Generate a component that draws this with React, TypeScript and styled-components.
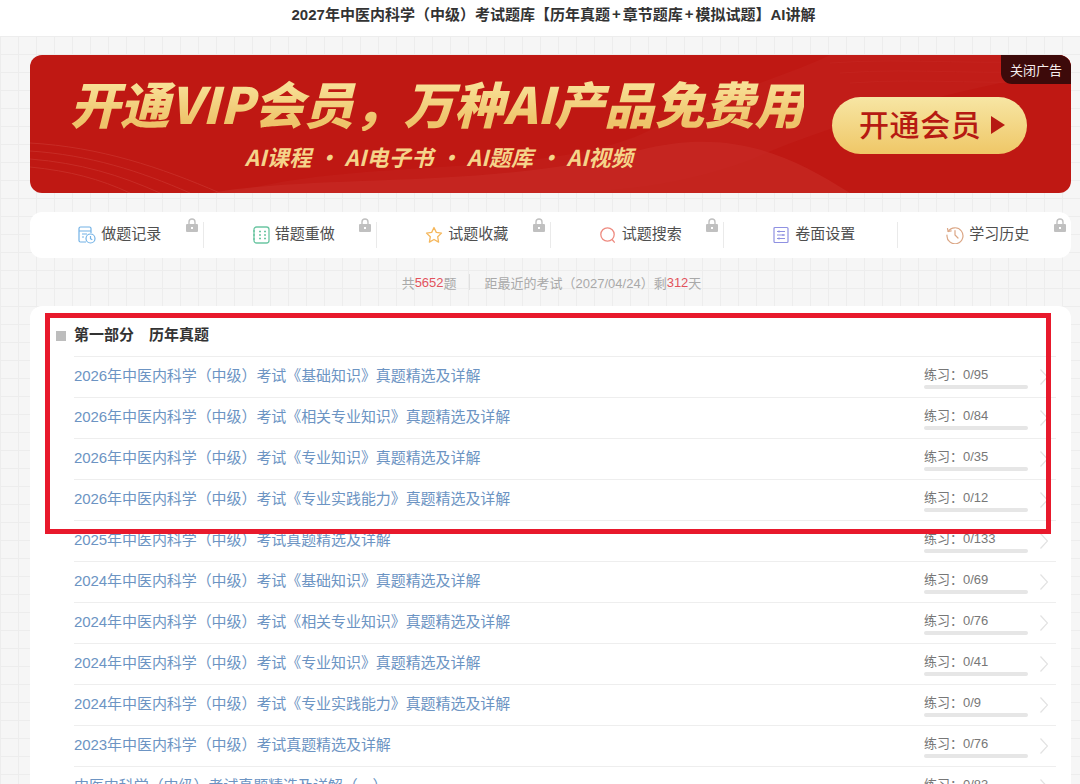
import React from "react";
import styled, { createGlobalStyle } from "styled-components";

const Global = createGlobalStyle`
  html, body { margin: 0; padding: 0; height: 784px; overflow: hidden; background: #f6f6f6; }
  body { font-family: "Liberation Sans", "Noto Sans CJK SC", sans-serif; }
`;

const Page = styled.div`
  position: relative;
  width: 1080px;
  height: 784px;
  overflow: hidden;
  background-color: #f6f6f6;
  background-image:
    linear-gradient(#ededed 1px, transparent 1px),
    linear-gradient(90deg, #ededed 1px, transparent 1px);
  background-size: 18px 18px;
`;

const Header = styled.header`
  height: 36px;
  background: #fff;
  display: flex;
  align-items: center;
  justify-content: center;
  box-sizing: border-box;
  padding: 0 0 9px 27px;
  font-size: 15px;
  font-weight: 700;
  color: #333;
`;

const PlusSign = styled.span`
  margin: 0 2px;
`;

const Main = styled.main`
  padding: 19px 9px 0 30px;
`;

const Banner = styled.section`
  position: relative;
  height: 138px;
  border-radius: 12px;
  overflow: hidden;
  background: #bf1813;
  display: flex;
  align-items: center;
  padding-left: 40px;
  box-sizing: border-box;
`;

const BannerWaves = styled.svg`
  position: absolute;
  inset: 0;
  width: 100%;
  height: 100%;
`;

const BannerCopy = styled.div`
  position: relative;
  width: 734px;
  display: flex;
  flex-direction: column;
  align-items: center;
  margin-top: -4px;
`;

const BannerTitle = styled.div`
  font-family: "Noto Sans CJK SC", sans-serif;
  font-size: 50px;
  line-height: 58px;
  font-weight: 900;
  font-style: italic;
  white-space: nowrap;
  background: linear-gradient(180deg, #f8e096 20%, #eec36a 85%);
  -webkit-background-clip: text;
  background-clip: text;
  color: transparent;
`;

const BannerSub = styled.div`
  font-family: "Noto Sans CJK SC", sans-serif;
  font-size: 22px;
  line-height: 30px;
  font-weight: 700;
  font-style: italic;
  letter-spacing: 0.35px;
  color: #f5d48a;
  white-space: pre;
  margin-top: 10px;
  padding-left: 4px;
`;

const OpenButton = styled.div`
  position: relative;
  margin-left: 28px;
  margin-top: 2px;
  width: 195px;
  height: 57px;
  border-radius: 29px;
  background: linear-gradient(180deg, #f7e6a4 0%, #efc767 100%);
  display: flex;
  align-items: center;
  padding-left: 27px;
  box-sizing: border-box;
  font-family: "Noto Sans CJK SC", sans-serif;
  font-size: 30px;
  letter-spacing: 0.6px;
  font-weight: 500;
  color: #b61a12;
  white-space: nowrap;
`;

const ButtonLabel = styled.span`
  padding-bottom: 4px;
  margin-right: 10px;
`;

const Triangle = styled.span`
  width: 0;
  height: 0;
  border-left: 14px solid #b61a12;
  border-top: 9px solid transparent;
  border-bottom: 9px solid transparent;
`;

const CloseAd = styled.div`
  position: absolute;
  top: 0;
  right: 0;
  width: 70px;
  height: 29px;
  background: #3d0a0a;
  border-bottom-left-radius: 11px;
  display: flex;
  align-items: center;
  justify-content: center;
  font-size: 13px;
  color: #f4eeee;
`;

const Toolbar = styled.nav`
  margin-top: 19px;
  height: 46px;
  background: #fff;
  border-radius: 12px;
  display: grid;
  grid-template-columns: repeat(6, 1fr);
  align-items: center;
`;

const ToolItem = styled.div<{ $last?: boolean }>`
  position: relative;
  height: 26px;
  display: flex;
  align-items: center;
  justify-content: center;
  gap: 5px;
  padding-left: 7px;
  font-size: 15px;
  color: #4f4f4f;
  border-right: ${(p) => (p.$last ? "none" : "1px solid #eaeaea")};
`;

const ToolLabel = styled.span`
  padding-bottom: 5px;
`;

const LockBadge = styled.svg`
  position: absolute;
  top: -4px;
  right: 5px;
  width: 12px;
  height: 14px;
`;

const ToolIcon = styled.svg`
  width: 18px;
  height: 18px;
  flex: none;
  fill: none;
`;

const Stats = styled.div`
  height: 48px;
  display: flex;
  align-items: center;
  justify-content: center;
  font-size: 13px;
  color: #a9a9a9;
  margin-left: 2px;
`;

const Red = styled.span`
  color: #e2525c;
`;

const StatDivider = styled.span`
  width: 1px;
  height: 16px;
  background: #e0e0e0;
  margin: 0 15px 0 12px;
`;

const Card = styled.section`
  background: #fff;
  border-radius: 12px 12px 0 0;
  padding: 9px 15px 0 26px;
`;

const SectionHead = styled.h2`
  margin: 0;
  height: 41px;
  box-sizing: border-box;
  padding-bottom: 4px;
  display: flex;
  align-items: center;
  gap: 8px;
  font-size: 15px;
  font-weight: 700;
  color: #333;
`;

const SquareMark = styled.span`
  width: 10px;
  height: 10px;
  margin-top: 5px;
  background: #bdbdbd;
`;

const Row = styled.div`
  margin-left: 18px;
  height: 41px;
  box-sizing: border-box;
  border-top: 1px solid #eeeeee;
  display: flex;
  align-items: center;
`;

const RowTitle = styled.a`
  flex: 1;
  font-size: 15px;
  letter-spacing: -0.07px;
  padding-bottom: 5px;
  color: #6c94c3;
  white-space: nowrap;
`;

const Practice = styled.div`
  width: 104px;
  display: flex;
  flex-direction: column;
  gap: 1px;
  margin-top: 1px;
  font-size: 13px;
  line-height: 18px;
  color: #777;
`;

const Track = styled.div`
  height: 4px;
  border-radius: 2px;
  background: #e6e6e6;
`;

const Chevron = styled.svg`
  width: 8px;
  height: 16px;
  margin: 0 8px 0 12px;
  fill: none;
  stroke: #e2e2e2;
  stroke-width: 1.2;
`;

const Annotation = styled.div`
  position: absolute;
  left: 45px;
  top: 313px;
  width: 1006px;
  height: 221px;
  box-sizing: border-box;
  border: 5px solid #e8192c;
  pointer-events: none;
`;

const Lock = () => (
  <LockBadge viewBox="0 0 12 14">
    <path d="M3 6V4a3 3 0 0 1 6 0v2" fill="none" stroke="#c0c0c0" strokeWidth="1.4" />
    <path fillRule="evenodd" fill="#c0c0c0" d="M1 6h10a1 1 0 0 1 1 1v6a1 1 0 0 1-1 1H1a1 1 0 0 1-1-1V7a1 1 0 0 1 1-1zM5 9v2h2V9z" />
  </LockBadge>
);

const RecordIcon = () => (
  <ToolIcon viewBox="0 0 18 18" stroke="#72b2e6" strokeWidth="1.2">
    <path d="M8 16H2.500A1.500 1.500 0 0 1 1 14.500v-12A1.500 1.500 0 0 1 2.500 1h9A1.500 1.500 0 0 1 13 2.500V7" />
    <path d="M1 5h12M4 8h5M4 11h2" />
    <circle cx="12.500" cy="12.500" r="4.500" />
    <path d="M12.500 10v2.700l1.800 1" />
  </ToolIcon>
);

const RedoIcon = () => (
  <ToolIcon viewBox="0 0 18 18" stroke="#6cc6a3" strokeWidth="1.3">
    <rect x="2" y="1" width="15" height="16" rx="2.500" />
    <path d="M1 5h2M1 9h2M1 13h2M7 5.500h2M12 5.500h2M7 9h2M12 9h2M7 12.500h2M12 12.500h2" />
  </ToolIcon>
);

const StarIcon = () => (
  <ToolIcon viewBox="0 0 18 18" stroke="#f5b75c" strokeWidth="1.3" strokeLinejoin="round">
    <path d="M9 1.500l2.300 4.900 5.200.7-3.800 3.700.9 5.300L9 13.500l-4.600 2.600.9-5.300L1.500 7.100l5.200-.7z" />
  </ToolIcon>
);

const SearchIcon = () => (
  <ToolIcon viewBox="0 0 18 18" stroke="#ee8b80" strokeWidth="1.3" strokeLinecap="round">
    <circle cx="8.500" cy="8.500" r="6.700" />
    <path d="M13.500 14l1.800 2.200" />
  </ToolIcon>
);

const SettingsIcon = () => (
  <ToolIcon viewBox="0 0 18 18" stroke="#8f91e2" strokeWidth="1.2">
    <rect x="2" y="1.500" width="14" height="15" rx="1" />
    <path d="M5 5.500h8M5 9h8M5 12.500h8" />
    <path d="M7 4.500v2M11 8v2M7 11.500v2" />
  </ToolIcon>
);

const HistoryIcon = () => (
  <ToolIcon viewBox="0 0 18 18" stroke="#dba685" strokeWidth="1.2" strokeLinecap="round" strokeLinejoin="round">
    <path d="M2.200 5.500A8 8 0 1 1 1 9" />
    <path d="M1.500 2.500l.7 3 3-.6" />
    <path d="M9 4.500V9l3 3" />
  </ToolIcon>
);

const tools: { label: string; icon: React.ReactNode; locked: boolean }[] = [
  { label: "做题记录", icon: <RecordIcon />, locked: true },
  { label: "错题重做", icon: <RedoIcon />, locked: true },
  { label: "试题收藏", icon: <StarIcon />, locked: true },
  { label: "试题搜索", icon: <SearchIcon />, locked: true },
  { label: "卷面设置", icon: <SettingsIcon />, locked: false },
  { label: "学习历史", icon: <HistoryIcon />, locked: true },
];

const rows: [string, number][] = [
  ["2026年中医内科学（中级）考试《基础知识》真题精选及详解", 95],
  ["2026年中医内科学（中级）考试《相关专业知识》真题精选及详解", 84],
  ["2026年中医内科学（中级）考试《专业知识》真题精选及详解", 35],
  ["2026年中医内科学（中级）考试《专业实践能力》真题精选及详解", 12],
  ["2025年中医内科学（中级）考试真题精选及详解", 133],
  ["2024年中医内科学（中级）考试《基础知识》真题精选及详解", 69],
  ["2024年中医内科学（中级）考试《相关专业知识》真题精选及详解", 76],
  ["2024年中医内科学（中级）考试《专业知识》真题精选及详解", 41],
  ["2024年中医内科学（中级）考试《专业实践能力》真题精选及详解", 9],
  ["2023年中医内科学（中级）考试真题精选及详解", 76],
  ["中医内科学（中级）考试真题精选及详解（一）", 83],
];

export default function App() {
  return (
    <Page>
      <Global />
      <Header>
        2027年中医内科学（中级）考试题库【历年真题<PlusSign>+</PlusSign>章节题库<PlusSign>+</PlusSign>模拟试题】AI讲解
      </Header>
      <Main>
        <Banner>
          <BannerWaves viewBox="0 0 1041 138" preserveAspectRatio="none" fill="none">
            <path d="M200 138C340 100 520 125 620 75C690 38 760 20 800 0H1041V14C900 40 800 70 720 105C640 135 560 138 500 138Z" fill="#c11d18" />
            <path d="M180 138C300 118 460 135 610 95C700 72 760 100 820 138Z" fill="#c62a24" opacity="0.7" />
            <path d="M0 88C70 92 130 112 190 138M0 96C60 100 110 116 160 138M0 104C50 108 90 120 130 138M0 112C40 116 70 124 100 138" stroke="#c9312b" strokeWidth="0.8" />
            <path d="M800 8C880 2 960 12 1041 4M810 18C890 12 960 22 1041 14M820 28C900 22 970 32 1041 24" stroke="#c42420" strokeWidth="0.8" />
          </BannerWaves>
          <BannerCopy>
            <BannerTitle>开通VIP会员，万种AI产品免费用</BannerTitle>
            <BannerSub>AI课程 · AI电子书 · AI题库 · AI视频</BannerSub>
          </BannerCopy>
          <OpenButton>
            <ButtonLabel>开通会员</ButtonLabel>
            <Triangle />
          </OpenButton>
          <CloseAd>关闭广告</CloseAd>
        </Banner>
        <Toolbar>
          {tools.map((t, i) => (
            <ToolItem key={t.label} $last={i === tools.length - 1}>
              {t.icon}
              <ToolLabel>{t.label}</ToolLabel>
              {t.locked && <Lock />}
            </ToolItem>
          ))}
        </Toolbar>
        <Stats>
          共<Red>5652</Red>题
          <StatDivider />
          距最近的考试（2027/04/24）剩<Red>312</Red>天
        </Stats>
        <Card>
          <SectionHead>
            <SquareMark />
            第一部分　历年真题
          </SectionHead>
          {rows.map(([title, total], i) => (
            <Row key={i}>
              <RowTitle>{title}</RowTitle>
              <Practice>
                练习：0/{total}
                <Track />
              </Practice>
              <Chevron viewBox="0 0 8 16">
                <path d="M0.500 0.500L7.500 8L0.500 15.500" />
              </Chevron>
            </Row>
          ))}
        </Card>
      </Main>
      <Annotation />
    </Page>
  );
}
